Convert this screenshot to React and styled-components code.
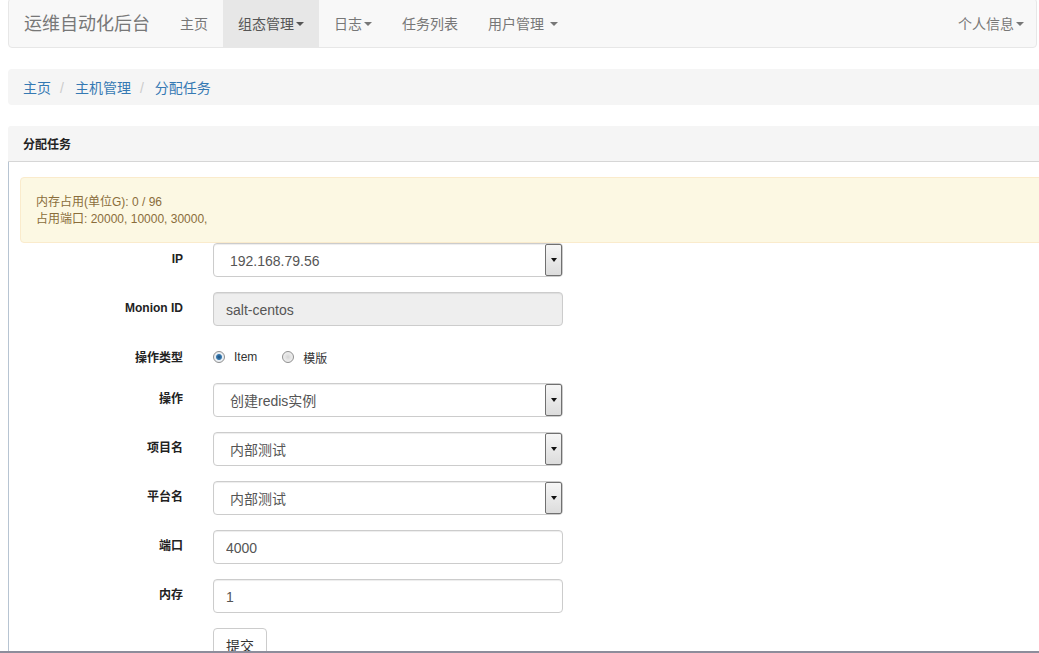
import React from "react";
import styled, { createGlobalStyle } from "styled-components";

const GlobalStyle = createGlobalStyle`
  html, body {
    margin: 0;
    padding: 0;
    background: #fff;
  }
  body {
    font-family: "Liberation Sans", "Noto Sans CJK SC", sans-serif;
    font-size: 14px;
    color: #333;
  }
  * {
    box-sizing: border-box;
  }
`;

const Screen = styled.div`
  height: 100vh;
  display: flex;
  flex-direction: column;
  overflow: hidden;
  border-bottom: 2px solid #8d8d9b;
`;

const Page = styled.div`
  flex: 1;
  min-height: 0;
  overflow: hidden;
  padding-left: 8px;
`;

const Navbar = styled.nav`
  width: 1029px;
  height: 50px;
  margin-top: -2px;
  margin-bottom: 21px;
  display: flex;
  background: #f8f8f8;
  border: 1px solid #e7e7e7;
  border-radius: 4px;
`;

const Brand = styled.a`
  padding: 15px 15px 13px;
  font-size: 18px;
  line-height: 20px;
  color: #777;
`;

const NavItem = styled.a`
  display: flex;
  align-items: center;
  padding: 2px ${(p) => p.$right || 15}px 0 15px;
  line-height: 20px;
  color: ${(p) => (p.$active ? "#555" : "#777")};
  background: ${(p) => (p.$active ? "#e7e7e7" : "transparent")};
`;

const Spacer = styled.div`
  flex: 1;
`;

const Caret = styled.span`
  display: inline-block;
  width: 0;
  height: 0;
  margin-left: ${(p) => p.$gap || 2}px;
  border-top: 4px solid;
  border-left: 4px solid transparent;
  border-right: 4px solid transparent;
`;

const Breadcrumb = styled.ol`
  width: 1060px;
  display: flex;
  list-style: none;
  margin: 0 0 21px;
  padding: 9px 15px 7px;
  line-height: 20px;
  background: #f5f5f5;
  border-radius: 4px;
`;

const Crumb = styled.li`
  color: #3579b3;
  & + &::before {
    content: "/";
    color: #ccc;
    padding: 0 11px 0 9px;
  }
`;

const Panel = styled.section`
  width: 1060px;
`;

const PanelHeading = styled.div`
  padding: 11px 15px 9px;
  height: 36px;
  font-size: 12px;
  line-height: 16px;
  font-weight: bold;
  color: #222;
  background: #f5f5f5;
  border-bottom: 1px solid #d6d6d6;
  border-radius: 3px 3px 0 0;
`;

const PanelBody = styled.div`
  padding: 15px 15px 0 11px;
  border-left: 1px solid #b7c4d2;
`;

const Alert = styled.div`
  padding: 16px 15px 14px;
  font-size: 12px;
  line-height: 17px;
  color: #8a6d3b;
  background: #fcf8e3;
  border: 1px solid #faebcc;
  border-radius: 4px;
`;

const FormRow = styled.div`
  display: grid;
  grid-template-columns: 163px 350px;
  column-gap: 30px;
  align-items: start;
  margin-bottom: 15px;
`;

const Label = styled.label`
  text-align: right;
  font-size: 12px;
  font-weight: bold;
  line-height: 16px;
  padding-top: ${(p) => p.$top || 8}px;
  color: #222;
`;

const TextInput = styled.input`
  width: 350px;
  height: 34px;
  padding: 7px 12px 5px;
  font-family: "Liberation Sans", "Noto Sans CJK SC", sans-serif;
  font-size: 14px;
  line-height: 20px;
  color: #555;
  background: ${(p) => (p.disabled ? "#eee" : "#fff")};
  border: 1px solid #ccc;
  border-radius: 4px;
  box-shadow: inset 0 1px 1px rgba(0, 0, 0, 0.075);
  outline: none;
`;

const SelectBox = styled.div`
  width: 350px;
  height: 34px;
  display: flex;
  align-items: stretch;
  border: 1px solid #ccc;
  border-radius: 4px;
  background: #fff;
  box-shadow: inset 0 1px 1px rgba(0, 0, 0, 0.075);
`;

const SelectText = styled.span`
  flex: 1;
  padding: 1px 0 0 16px;
  line-height: 32px;
  color: #555;
`;

const DropButton = styled.span`
  width: 17px;
  display: flex;
  align-items: center;
  justify-content: center;
  border: 1px solid #707070;
  border-radius: 2px;
  background: linear-gradient(#f6f6f6, #dcdcdc);
  &::after {
    content: "";
    border-top: 4px solid #111;
    border-left: 3.5px solid transparent;
    border-right: 3.5px solid transparent;
  }
`;

const RadioGroup = styled.div`
  height: 27px;
  display: flex;
  align-items: center;
  padding-top: 5px;
  font-size: 12px;
`;

const RadioOption = styled.label`
  display: flex;
  align-items: center;
  margin-right: 25px;
  color: #333;
`;

const RadioDot = styled.span`
  width: 12px;
  height: 12px;
  margin-right: 9px;
  border-radius: 50%;
  border: 1px solid #8f8f8f;
  background: ${(p) =>
    p.$checked
      ? "radial-gradient(circle, #1d4f7c 0, #3a7bb0 2.5px, #e8eef4 3.5px, #f4f4f4 100%)"
      : "radial-gradient(circle, #d4d4d4 0, #e6e6e6 3px, #f6f6f6 100%)"};
`;

const SubmitButton = styled.button`
  height: 34px;
  padding: 7px 12px 5px;
  font-family: "Liberation Sans", "Noto Sans CJK SC", sans-serif;
  font-size: 14px;
  line-height: 20px;
  color: #333;
  background: #fff;
  border: 1px solid #ccc;
  border-radius: 4px;
`;

const Select = ({ value }) => (
  <SelectBox>
    <SelectText>{value}</SelectText>
    <DropButton />
  </SelectBox>
);

export default function App() {
  return (
    <>
      <GlobalStyle />
      <Screen>
        <Page>
          <Navbar>
            <Brand>运维自动化后台</Brand>
            <NavItem>主页</NavItem>
            <NavItem $active>
              组态管理<Caret />
            </NavItem>
            <NavItem>
              日志<Caret />
            </NavItem>
            <NavItem>任务列表</NavItem>
            <NavItem>
              用户管理<Caret $gap={6} />
            </NavItem>
            <Spacer />
            <NavItem $right={12}>
              个人信息<Caret />
            </NavItem>
          </Navbar>

          <Breadcrumb>
            <Crumb>主页</Crumb>
            <Crumb>主机管理</Crumb>
            <Crumb>分配任务</Crumb>
          </Breadcrumb>

          <Panel>
            <PanelHeading>分配任务</PanelHeading>
            <PanelBody>
              <Alert>
                内存占用(单位G): 0 / 96
                <br />
                占用端口: 20000, 10000, 30000,
              </Alert>

              <FormRow>
                <Label>IP</Label>
                <Select value="192.168.79.56" />
              </FormRow>
              <FormRow>
                <Label>Monion ID</Label>
                <TextInput disabled value="salt-centos" readOnly />
              </FormRow>
              <FormRow>
                <Label $top={9}>操作类型</Label>
                <RadioGroup>
                  <RadioOption>
                    <RadioDot $checked />
                    Item
                  </RadioOption>
                  <RadioOption>
                    <RadioDot />
                    模版
                  </RadioOption>
                </RadioGroup>
              </FormRow>
              <FormRow>
                <Label>操作</Label>
                <Select value="创建redis实例" />
              </FormRow>
              <FormRow>
                <Label>项目名</Label>
                <Select value="内部测试" />
              </FormRow>
              <FormRow>
                <Label>平台名</Label>
                <Select value="内部测试" />
              </FormRow>
              <FormRow>
                <Label>端口</Label>
                <TextInput value="4000" readOnly />
              </FormRow>
              <FormRow>
                <Label>内存</Label>
                <TextInput value="1" readOnly />
              </FormRow>
              <FormRow>
                <span />
                <div>
                  <SubmitButton>提交</SubmitButton>
                </div>
              </FormRow>
            </PanelBody>
          </Panel>
        </Page>
      </Screen>
    </>
  );
}
